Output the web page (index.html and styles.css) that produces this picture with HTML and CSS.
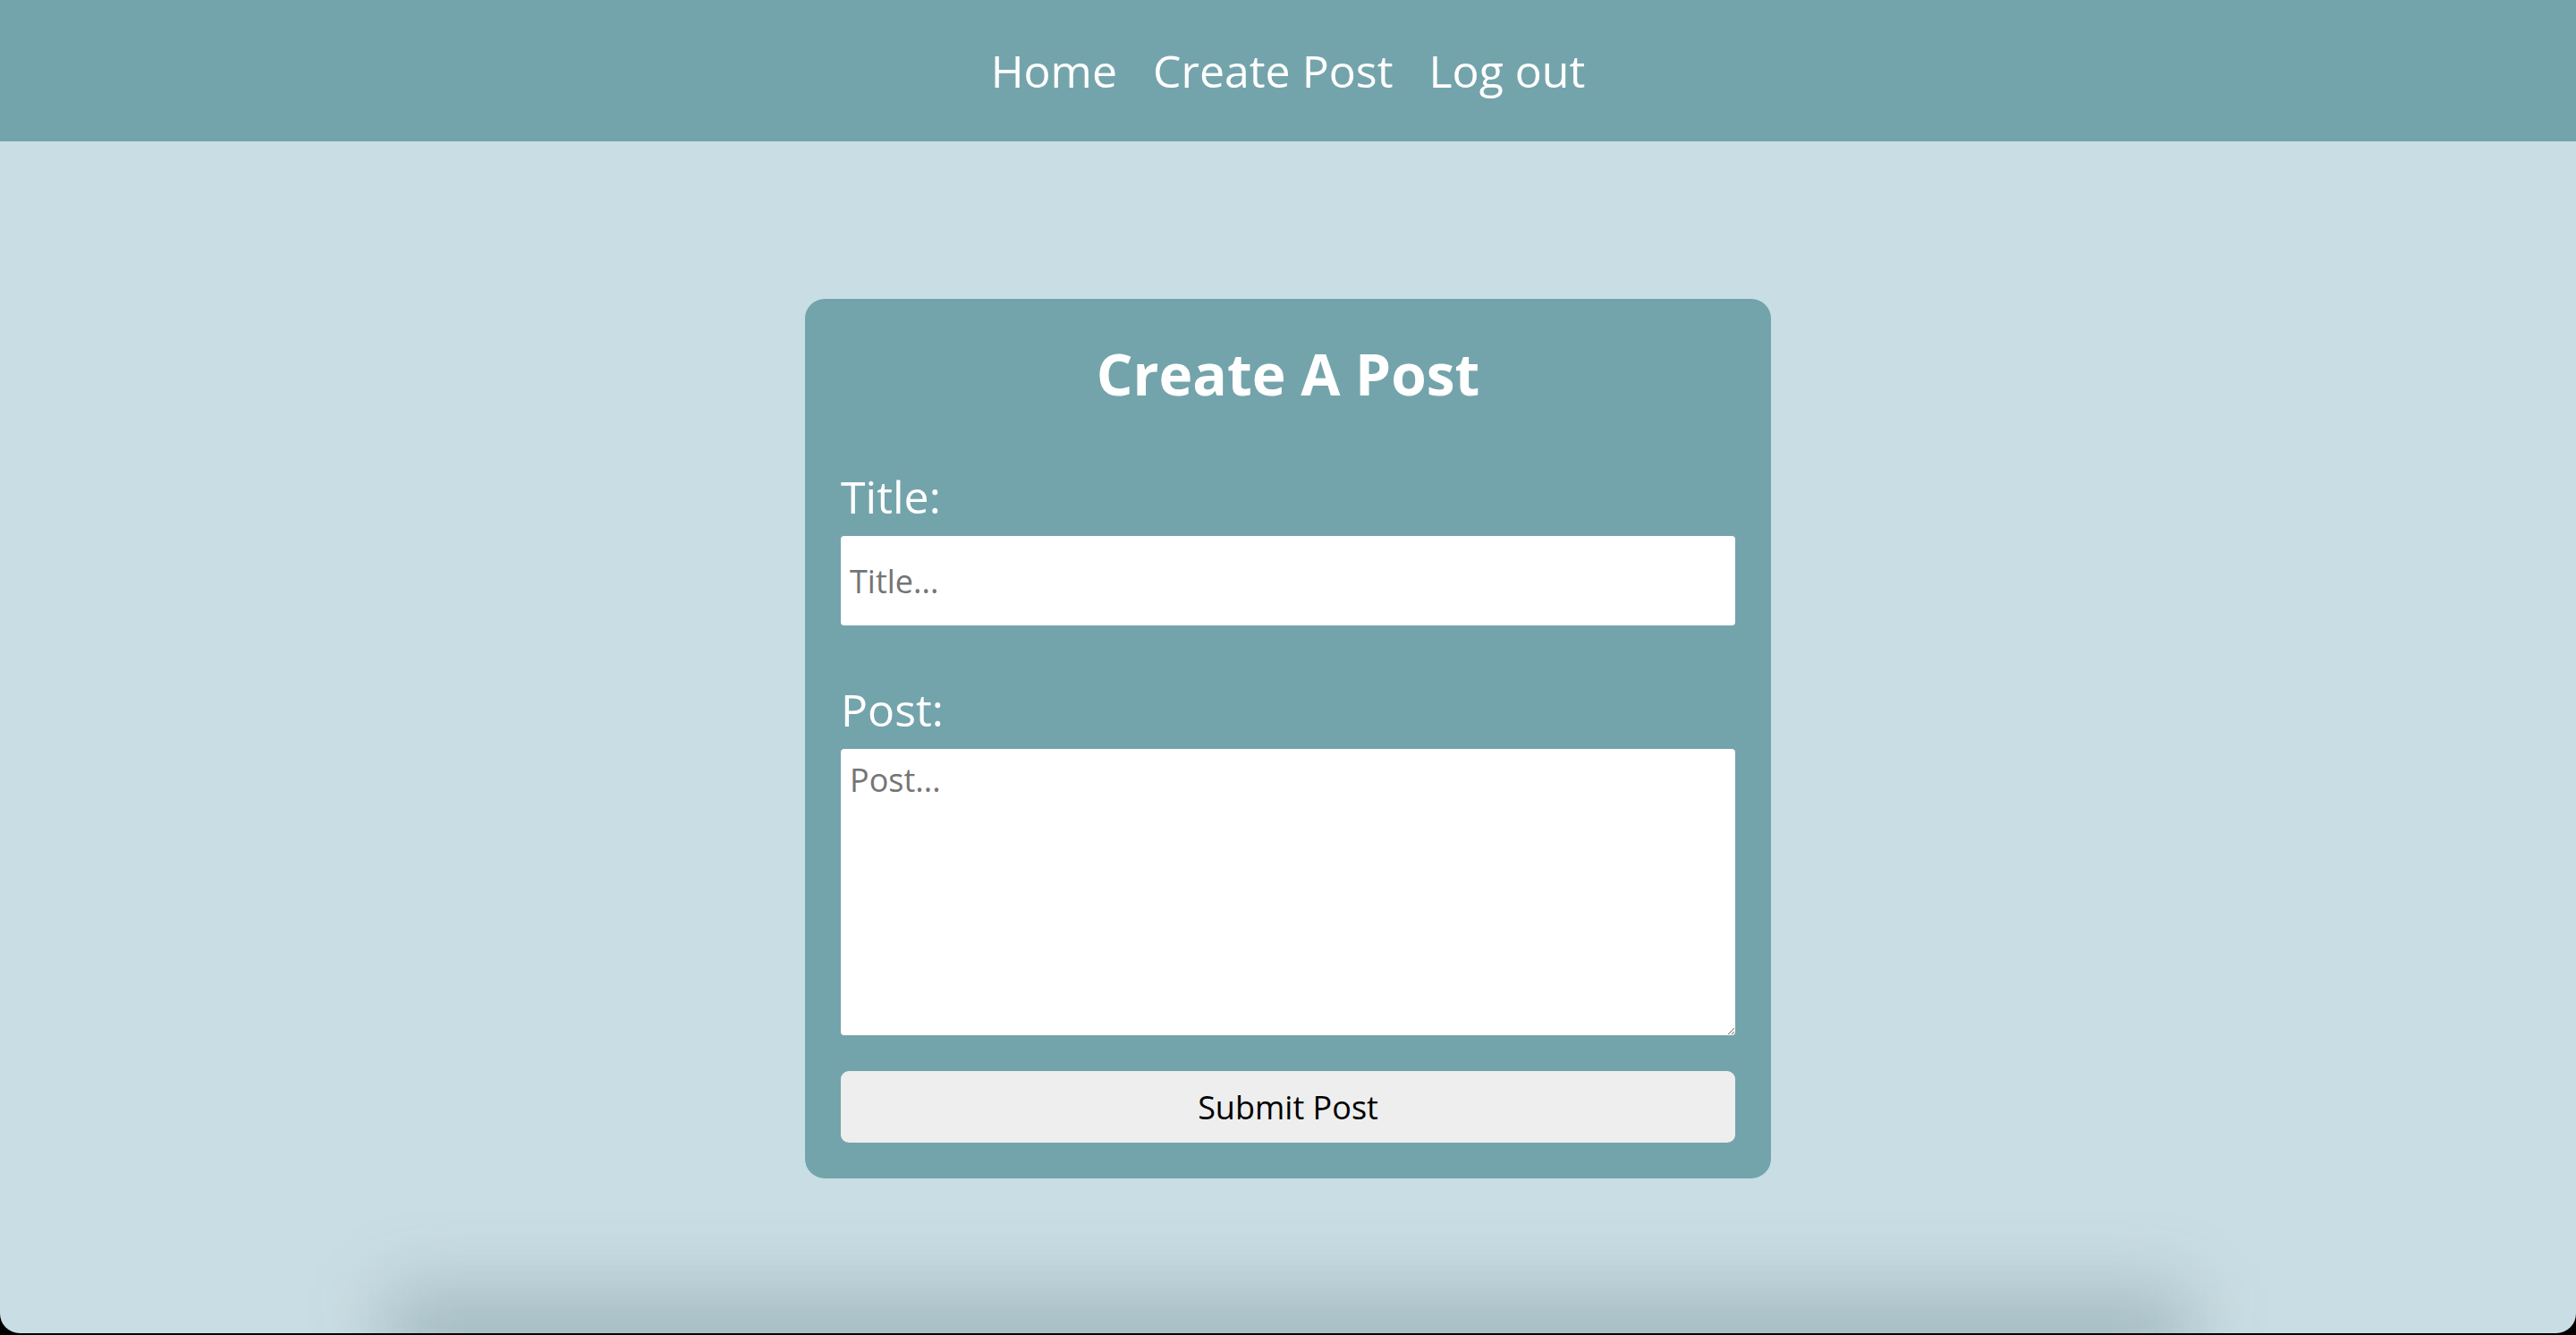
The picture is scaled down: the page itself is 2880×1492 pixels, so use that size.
FILE: index.html
```html
<!DOCTYPE html>
<html lang="en">
<head>
<meta charset="utf-8">
<title>Create A Post</title>
<link rel="stylesheet" href="styles.css">
</head>
<body>
<div class="window">
  <nav class="navbar">
    <a class="nav-link" href="#">Home</a>
    <a class="nav-link" href="#">Create Post</a>
    <a class="nav-link" href="#">Log out</a>
  </nav>
  <main class="page">
    <div class="card">
      <h1 class="card-title">Create A Post</h1>
      <div class="field">
        <label class="field-label" for="title">Title:</label>
        <input class="field-input" id="title" type="text" placeholder="Title...">
      </div>
      <div class="field">
        <label class="field-label" for="post">Post:</label>
        <textarea class="field-textarea" id="post" placeholder="Post..."></textarea>
      </div>
      <button class="submit-btn" type="button">Submit Post</button>
    </div>
  </main>
  <div class="dock-shadow"></div>
</div>
</body>
</html>
```
FILE: styles.css
```css
html {
  background: #000;
}
body {
  margin: 0;
  font-family: "Open Sans", "Noto Sans", sans-serif;
}
.window {
  position: relative;
  height: 1490px;
  background: #c9dee4;
  border-radius: 0 0 22px 22px;
  overflow: hidden;
  display: flex;
  flex-direction: column;
}
.navbar {
  height: 158px;
  flex: 0 0 158px;
  background: #74a4ab;
  display: flex;
  align-items: center;
  justify-content: center;
  gap: 40px;
}
.nav-link {
  color: #fff;
  text-decoration: none;
  font-size: 50px;
  line-height: normal;
}
.page {
  flex: 1;
  display: flex;
  align-items: center;
  justify-content: center;
  padding-top: 3px;
}
.card {
  width: 1000px;
  padding: 40px;
  background: #74a4ab;
  border-radius: 22px;
  display: flex;
  flex-direction: column;
}
.card-title {
  margin: 0 0 60px;
  text-align: center;
  color: #fff;
  font-size: 64px;
  font-weight: 700;
  line-height: normal;
}
.field {
  display: flex;
  flex-direction: column;
  margin-bottom: 60px;
}
.field:last-of-type {
  margin-bottom: 40px;
}
.field-label {
  color: #fff;
  font-size: 50px;
  line-height: normal;
  margin-bottom: 10px;
}
.field-input,
.field-textarea {
  box-sizing: border-box;
  width: 1000px;
  border: none;
  border-radius: 4px;
  background: #fff;
  font-family: "Open Sans", "Noto Sans", sans-serif;
  font-size: 36px;
  color: #000;
  padding: 0 10px;
  outline: none;
  margin: 0;
}
.field-input {
  height: 100px;
}
.field-textarea {
  height: 320px;
  padding: 10px;
  resize: vertical;
  line-height: normal;
  display: block;
}
.field-input::placeholder,
.field-textarea::placeholder {
  color: #757575;
}
.submit-btn {
  height: 80px;
  width: 1000px;
  border: none;
  border-radius: 9px;
  background: #eeeeee;
  color: #000;
  font-family: "Open Sans", "Noto Sans", sans-serif;
  font-size: 36px;
  padding: 0;
  margin: 0;
}
.dock-shadow {
  position: absolute;
  left: 430px;
  right: 430px;
  bottom: -70px;
  height: 120px;
  background: rgba(20, 50, 60, 0.2);
  filter: blur(42px);
  pointer-events: none;
}
```
